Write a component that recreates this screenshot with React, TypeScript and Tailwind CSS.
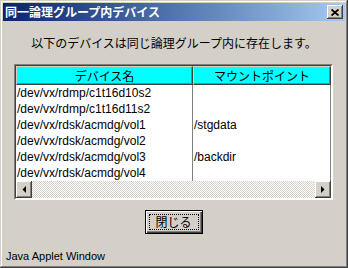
import React from "react";

// rows shown in the device list
const rows: [string, string][] = [
  ["/dev/vx/rdmp/c1t16d10s2", ""],
  ["/dev/vx/rdmp/c1t16d11s2", ""],
  ["/dev/vx/rdsk/acmdg/vol1", "/stgdata"],
  ["/dev/vx/rdsk/acmdg/vol2", ""],
  ["/dev/vx/rdsk/acmdg/vol3", "/backdir"],
  ["/dev/vx/rdsk/acmdg/vol4", ""],
];

const raised =
  "bg-[#d4d0c8] shadow-[inset_-1px_-1px_#404040,inset_1px_1px_#ffffff,inset_-2px_-2px_#808080]";

function ScrollButton({ dir }: { dir: "left" | "right" }) {
  return (
    <div className={`w-[16px] h-full flex items-center justify-center ${raised}`}>
      <svg width="4" height="7" viewBox="0 0 4 7">
        {dir === "left" ? (
          <polygon points="4,0 4,7 0.5,3.5" fill="#000" />
        ) : (
          <polygon points="0,0 0,7 3.5,3.5" fill="#000" />
        )}
      </svg>
    </div>
  );
}

export default function App() {
  return (
    <div className="w-[348px] h-[268px] bg-[#d4d0c8] p-[3px] flex flex-col shadow-[inset_-1px_-1px_#404040,inset_1px_1px_#d4d0c8,inset_-2px_-2px_#808080,inset_2px_2px_#ffffff] font-['Liberation_Sans','Noto_Sans_CJK_JP',sans-serif] text-black">
      {/* title bar */}
      <div className="h-[18px] flex items-center justify-between pl-[2px] pr-[2px] bg-linear-to-r from-[#0a246a] to-[#a6caf0]">
        <span className="text-white font-bold text-[12px] leading-[14px] font-['Noto_Sans_CJK_JP',sans-serif]">
          同一論理グループ内デバイス
        </span>
        <div className={`w-[16px] h-[14px] flex items-center justify-center ${raised}`}>
          <svg width="8" height="7" viewBox="0 0 8 7">
            <path d="M0.5 0.5 L7.5 6.5 M7.5 0.5 L0.5 6.5" stroke="#000" strokeWidth="1.8" />
          </svg>
        </div>
      </div>

      <div className="mt-[14px] text-center text-[12px] leading-[16px] font-['Noto_Sans_CJK_JP',sans-serif]">
        以下のデバイスは同じ論理グループ内に存在します。
      </div>

      {/* device table */}
      <div className="ml-[11px] mt-[13px] w-[319px] h-[136px] border border-t-[#808080] border-l-[#808080] border-r-white border-b-white">
        <div className="w-full h-full border border-t-[#404040] border-l-[#404040] border-r-white border-b-white bg-white flex flex-col">
          <div className="flex h-[19px] shrink-0">
            <div className="w-[177px] bg-[#00ffff] border border-t-[#d4d0c8] border-l-[#d4d0c8] border-r-[#404040] border-b-[#404040] shadow-[inset_-1px_-1px_#808080] flex items-center justify-center text-[12px] font-['Noto_Sans_CJK_JP',sans-serif]">
              デバイス名
            </div>
            <div className="w-[138px] bg-[#00ffff] border border-t-[#d4d0c8] border-l-[#d4d0c8] border-r-[#404040] border-b-[#404040] shadow-[inset_-1px_-1px_#808080] flex items-center justify-center text-[12px] font-['Noto_Sans_CJK_JP',sans-serif]">
              マウントポイント
            </div>
          </div>
          <div className="flex flex-col h-[96px] shrink-0">
            {rows.map(([dev, mnt]) => (
              <div key={dev} className="flex h-[16px] text-[12px] leading-[16px]">
                <div className="w-[177px] border-r border-[#808080] pl-[1px] whitespace-nowrap overflow-hidden">
                  {dev}
                </div>
                <div className="w-[138px] border-r border-[#808080] pl-[1px] whitespace-nowrap overflow-hidden">
                  {mnt}
                </div>
              </div>
            ))}
          </div>
          <div className="flex h-[17px] shrink-0">
            <ScrollButton dir="left" />
            <div className="flex-1 bg-[repeating-conic-gradient(#d4d0c8_0%_25%,#ffffff_0%_50%)] bg-[length:2px_2px]" />
            <ScrollButton dir="right" />
          </div>
        </div>
      </div>

      <button className="mt-[10px] self-center ml-[-1px] w-[58px] h-[24px] border border-black bg-[#d4d0c8] shadow-[inset_1px_1px_#ffffff,inset_-1px_-1px_#404040,inset_-2px_-2px_#808080] p-[3px] flex">
        <span className="flex-1 border border-dotted border-black flex items-center justify-center text-[12px] leading-[14px] font-['Noto_Sans_CJK_JP',sans-serif]">
          閉じる
        </span>
      </button>

      <div className="mt-[16px] pl-[3px] text-[11px] leading-[13px]">Java Applet Window</div>
    </div>
  );
}
